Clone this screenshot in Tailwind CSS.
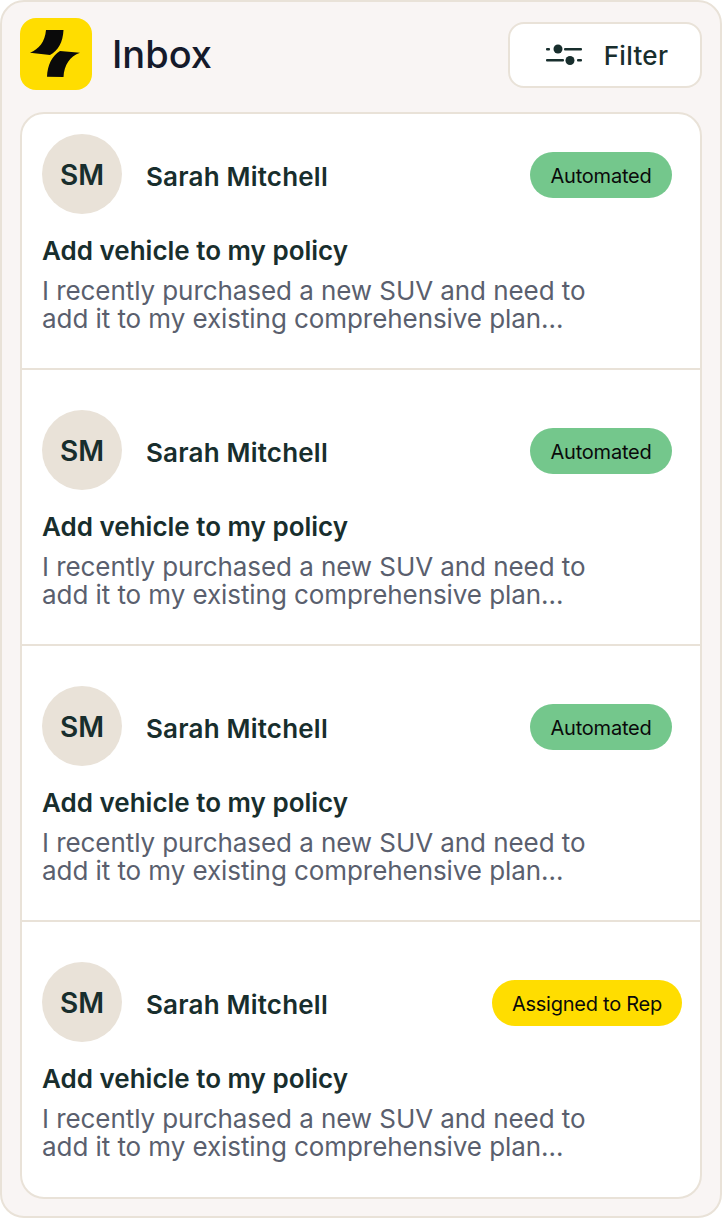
<!DOCTYPE html>
<html lang="en">
<head>
    <meta charset="UTF-8">
    <title>Inbox</title>
    <script src="https://cdn.jsdelivr.net/npm/@tailwindcss/browser@4"></script>
</head>
<body class="bg-white">
    <div class="w-[722px] h-[1218px] bg-[#f9f5f4] border-2 border-[#e9e2d8] rounded-[24px] px-[18px] pt-4 font-['Inter',sans-serif]">
        <!-- header -->
        <div class="flex items-center h-[72px]">
            <div class="w-[72px] h-[72px] bg-[#ffdd00] rounded-[16px]">
                <svg width="72" height="72" viewBox="0 0 72 72" fill="#0a0a0a">
                    <path d="M26 12 H43.5 C43 24 38 33 30 37 L10 34.7 C19 31 25 24 26 12 Z"/>
                    <path d="M60 34.7 L40 33 C32 38 27.5 47 27 58.7 L43.5 59 C44 47 50 38 60 34.7 Z"/>
                </svg>
            </div>
            <h1 class="ml-5 text-[38px] font-medium text-[#151a2b]">Inbox</h1>
            <button class="ml-auto mt-0.5 w-[194px] h-[66px] pl-1 bg-white border-2 border-[#e9e2d8] rounded-[16px] flex items-center justify-center gap-[22px] text-[26px] font-medium text-[#182e2d] tracking-[0.3px]">
                <svg width="36" height="22" viewBox="0 0 36 22" fill="#182e2d">
                    <rect x="0" y="4" width="4" height="2.5" rx="1"/>
                    <circle cx="12" cy="5" r="4.5"/>
                    <rect x="18" y="4" width="18" height="2.5" rx="1"/>
                    <rect x="0" y="15" width="18" height="2.5" rx="1"/>
                    <circle cx="24" cy="16.5" r="4.5"/>
                    <rect x="31" y="15" width="5" height="2.5" rx="1"/>
                </svg>
                Filter
            </button>
        </div>

        <!-- list -->
        <div class="mt-[22px] bg-white border-2 border-[#e9e2d8] rounded-[24px] divide-y-2 divide-[#e9e2d8] overflow-hidden">
            <div class="h-[256px] pl-5 pr-[18px] pt-5">
                <div class="flex items-center">
                    <div class="w-20 h-20 pt-0.5 rounded-full bg-[#e9e2d8] flex items-center justify-center text-[28px] font-semibold text-[#182e2d]">SM</div>
                    <div class="ml-6 mt-1 text-[26px] font-semibold text-[#182e2d] tracking-[0.2px]">Sarah Mitchell</div>
                    <div class="ml-auto mr-2.5 mt-0.5 pt-0.5 h-[46px] w-[142px] rounded-full bg-[#74c78c] flex items-center justify-center text-[20px] text-[#0a0a0a] tracking-[-0.2px]">Automated</div>
                </div>
                <div class="mt-[21px] text-[26px] leading-[32px] font-semibold text-[#182e2d]">Add vehicle to my policy</div>
                <p class="mt-2.5 text-[26px] leading-[28px] text-[#5a5f6e] tracking-[-0.07px]">I recently purchased a new SUV and need to<br>add it to my existing comprehensive plan...</p>
            </div>
            <div class="h-[276px] pl-5 pr-[18px] pt-10">
                <div class="flex items-center">
                    <div class="w-20 h-20 pt-0.5 rounded-full bg-[#e9e2d8] flex items-center justify-center text-[28px] font-semibold text-[#182e2d]">SM</div>
                    <div class="ml-6 mt-1 text-[26px] font-semibold text-[#182e2d] tracking-[0.2px]">Sarah Mitchell</div>
                    <div class="ml-auto mr-2.5 mt-0.5 pt-0.5 h-[46px] w-[142px] rounded-full bg-[#74c78c] flex items-center justify-center text-[20px] text-[#0a0a0a] tracking-[-0.2px]">Automated</div>
                </div>
                <div class="mt-[21px] text-[26px] leading-[32px] font-semibold text-[#182e2d]">Add vehicle to my policy</div>
                <p class="mt-2.5 text-[26px] leading-[28px] text-[#5a5f6e] tracking-[-0.07px]">I recently purchased a new SUV and need to<br>add it to my existing comprehensive plan...</p>
            </div>
            <div class="h-[276px] pl-5 pr-[18px] pt-10">
                <div class="flex items-center">
                    <div class="w-20 h-20 pt-0.5 rounded-full bg-[#e9e2d8] flex items-center justify-center text-[28px] font-semibold text-[#182e2d]">SM</div>
                    <div class="ml-6 mt-1 text-[26px] font-semibold text-[#182e2d] tracking-[0.2px]">Sarah Mitchell</div>
                    <div class="ml-auto mr-2.5 mt-0.5 pt-0.5 h-[46px] w-[142px] rounded-full bg-[#74c78c] flex items-center justify-center text-[20px] text-[#0a0a0a] tracking-[-0.2px]">Automated</div>
                </div>
                <div class="mt-[21px] text-[26px] leading-[32px] font-semibold text-[#182e2d]">Add vehicle to my policy</div>
                <p class="mt-2.5 text-[26px] leading-[28px] text-[#5a5f6e] tracking-[-0.07px]">I recently purchased a new SUV and need to<br>add it to my existing comprehensive plan...</p>
            </div>
            <div class="h-[275px] pl-5 pr-[18px] pt-10">
                <div class="flex items-center">
                    <div class="w-20 h-20 pt-0.5 rounded-full bg-[#e9e2d8] flex items-center justify-center text-[28px] font-semibold text-[#182e2d]">SM</div>
                    <div class="ml-6 mt-1 text-[26px] font-semibold text-[#182e2d] tracking-[0.2px]">Sarah Mitchell</div>
                    <div class="ml-auto mt-0.5 pt-0.5 h-[46px] w-[190px] rounded-full bg-[#ffdd00] flex items-center justify-center text-[20px] text-[#0a0a0a] tracking-[-0.25px]">Assigned to Rep</div>
                </div>
                <div class="mt-[21px] text-[26px] leading-[32px] font-semibold text-[#182e2d]">Add vehicle to my policy</div>
                <p class="mt-2.5 text-[26px] leading-[28px] text-[#5a5f6e] tracking-[-0.07px]">I recently purchased a new SUV and need to<br>add it to my existing comprehensive plan...</p>
            </div>
        </div>
    </div>
</body>
</html>
